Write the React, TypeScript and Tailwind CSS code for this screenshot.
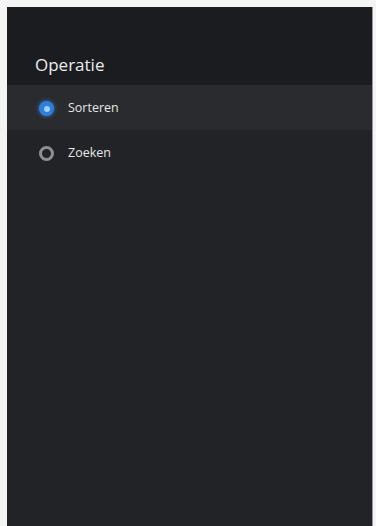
export default function App() {
  return (
    <div className="h-[526px] w-[376px] bg-[#f4f4f5] pl-[7px] pr-[3px] pt-[7px]" style={{ fontFamily: '"Open Sans", "Noto Sans", sans-serif' }}>
      <div className="flex h-full flex-col border-r border-[#9a9a9c] bg-[#222326]">
        <div className="flex h-[78px] items-end bg-[#1b1c1f] px-[28px] pb-[12px]">
          <h1 className="text-[17px] leading-none text-[#ececec]">Operatie</h1>
        </div>
        <RadioRow label="Sorteren" checked />
        <RadioRow label="Zoeken" />
      </div>
    </div>
  );
}

function RadioRow({ label, checked = false }: { label: string; checked?: boolean }) {
  return (
    <div className={`flex h-[45px] items-center gap-[14px] px-[32px] pt-[2px] ${checked ? "bg-[#2a2b2e]" : ""}`}>
      {checked ? (
        <span className="flex h-[15px] w-[15px] items-center justify-center rounded-full bg-[#2f7fd8] shadow-[0_0_4px_#2f7fd8]">
          <span className="h-[6px] w-[6px] rounded-full bg-[#9fd0ff]" />
        </span>
      ) : (
        <span className="h-[15px] w-[15px] rounded-full border-[3px] border-[#8e8f92]" />
      )}
      <span className="text-[12.5px] text-[#e6e6e6]">{label}</span>
    </div>
  );
}
